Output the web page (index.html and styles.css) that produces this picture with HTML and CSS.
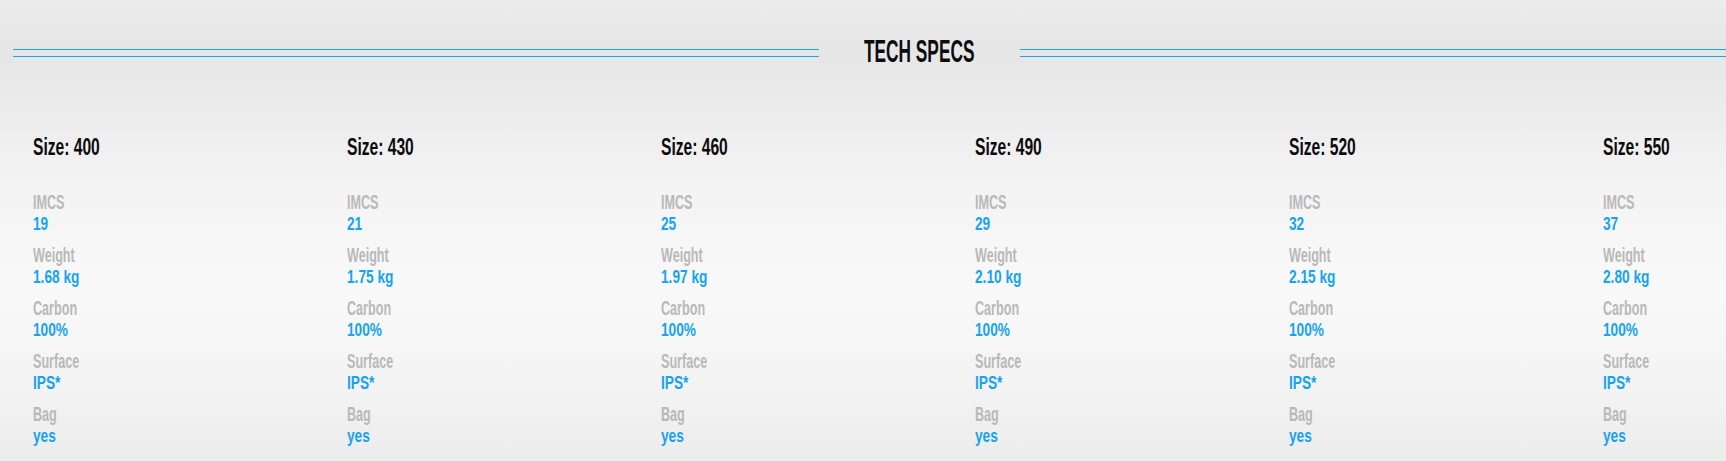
FILE: index.html
```html
<!DOCTYPE html>
<html lang="en">
<head>
<meta charset="utf-8">
<title>Tech Specs</title>
<link rel="stylesheet" href="styles.css">
</head>
<body>
<div class="page">
  <header class="title-row">
    <div class="rule rule-left"></div>
    <h2 class="title"><span class="title-text">TECH SPECS</span></h2>
    <div class="rule rule-right"></div>
  </header>
  <section class="specs">
    <div class="col">
      <h3 class="size"><span class="sq">Size: 400</span></h3>
      <dl class="list">
        <div class="item"><dt class="label"><span class="lq">IMCS</span></dt><dd class="value"><span class="vq">19</span></dd></div>
        <div class="item"><dt class="label"><span class="lq">Weight</span></dt><dd class="value"><span class="vq">1.68 kg</span></dd></div>
        <div class="item"><dt class="label"><span class="lq">Carbon</span></dt><dd class="value"><span class="vq">100%</span></dd></div>
        <div class="item"><dt class="label"><span class="lq">Surface</span></dt><dd class="value"><span class="vq">IPS*</span></dd></div>
        <div class="item"><dt class="label"><span class="lq">Bag</span></dt><dd class="value"><span class="vq">yes</span></dd></div>
      </dl>
    </div>
    <div class="col">
      <h3 class="size"><span class="sq">Size: 430</span></h3>
      <dl class="list">
        <div class="item"><dt class="label"><span class="lq">IMCS</span></dt><dd class="value"><span class="vq">21</span></dd></div>
        <div class="item"><dt class="label"><span class="lq">Weight</span></dt><dd class="value"><span class="vq">1.75 kg</span></dd></div>
        <div class="item"><dt class="label"><span class="lq">Carbon</span></dt><dd class="value"><span class="vq">100%</span></dd></div>
        <div class="item"><dt class="label"><span class="lq">Surface</span></dt><dd class="value"><span class="vq">IPS*</span></dd></div>
        <div class="item"><dt class="label"><span class="lq">Bag</span></dt><dd class="value"><span class="vq">yes</span></dd></div>
      </dl>
    </div>
    <div class="col">
      <h3 class="size"><span class="sq">Size: 460</span></h3>
      <dl class="list">
        <div class="item"><dt class="label"><span class="lq">IMCS</span></dt><dd class="value"><span class="vq">25</span></dd></div>
        <div class="item"><dt class="label"><span class="lq">Weight</span></dt><dd class="value"><span class="vq">1.97 kg</span></dd></div>
        <div class="item"><dt class="label"><span class="lq">Carbon</span></dt><dd class="value"><span class="vq">100%</span></dd></div>
        <div class="item"><dt class="label"><span class="lq">Surface</span></dt><dd class="value"><span class="vq">IPS*</span></dd></div>
        <div class="item"><dt class="label"><span class="lq">Bag</span></dt><dd class="value"><span class="vq">yes</span></dd></div>
      </dl>
    </div>
    <div class="col">
      <h3 class="size"><span class="sq">Size: 490</span></h3>
      <dl class="list">
        <div class="item"><dt class="label"><span class="lq">IMCS</span></dt><dd class="value"><span class="vq">29</span></dd></div>
        <div class="item"><dt class="label"><span class="lq">Weight</span></dt><dd class="value"><span class="vq">2.10 kg</span></dd></div>
        <div class="item"><dt class="label"><span class="lq">Carbon</span></dt><dd class="value"><span class="vq">100%</span></dd></div>
        <div class="item"><dt class="label"><span class="lq">Surface</span></dt><dd class="value"><span class="vq">IPS*</span></dd></div>
        <div class="item"><dt class="label"><span class="lq">Bag</span></dt><dd class="value"><span class="vq">yes</span></dd></div>
      </dl>
    </div>
    <div class="col">
      <h3 class="size"><span class="sq">Size: 520</span></h3>
      <dl class="list">
        <div class="item"><dt class="label"><span class="lq">IMCS</span></dt><dd class="value"><span class="vq">32</span></dd></div>
        <div class="item"><dt class="label"><span class="lq">Weight</span></dt><dd class="value"><span class="vq">2.15 kg</span></dd></div>
        <div class="item"><dt class="label"><span class="lq">Carbon</span></dt><dd class="value"><span class="vq">100%</span></dd></div>
        <div class="item"><dt class="label"><span class="lq">Surface</span></dt><dd class="value"><span class="vq">IPS*</span></dd></div>
        <div class="item"><dt class="label"><span class="lq">Bag</span></dt><dd class="value"><span class="vq">yes</span></dd></div>
      </dl>
    </div>
    <div class="col">
      <h3 class="size"><span class="sq">Size: 550</span></h3>
      <dl class="list">
        <div class="item"><dt class="label"><span class="lq">IMCS</span></dt><dd class="value"><span class="vq">37</span></dd></div>
        <div class="item"><dt class="label"><span class="lq">Weight</span></dt><dd class="value"><span class="vq">2.80 kg</span></dd></div>
        <div class="item"><dt class="label"><span class="lq">Carbon</span></dt><dd class="value"><span class="vq">100%</span></dd></div>
        <div class="item"><dt class="label"><span class="lq">Surface</span></dt><dd class="value"><span class="vq">IPS*</span></dd></div>
        <div class="item"><dt class="label"><span class="lq">Bag</span></dt><dd class="value"><span class="vq">yes</span></dd></div>
      </dl>
    </div>
  </section>
</div>
</body>
</html>
```

FILE: styles.css
```css
html, body {
  margin: 0;
  padding: 0;
}

body {
  width: 1726px;
  height: 461px;
  overflow: hidden;
  font-family: "Liberation Sans", Arial, sans-serif;
  background: linear-gradient(to bottom, #ececec 0px, #e6e6e6 50px, #f3f3f3 180px, #f9f9f9 290px, #f3f3f3 390px, #ececec 461px);
}

.page {
  width: 1726px;
  height: 461px;
  overflow: hidden;
}

/* ---------- title row ---------- */
.title-row {
  display: flex;
  align-items: flex-start;
  padding: 35px 0 0 13px;
  height: 32px;
}

.rule {
  height: 6px;
  margin-top: 14px;
  border-top: 1px solid #1aa6ec;
  border-bottom: 1px solid #1aa6ec;
}

.rule-left {
  width: 806px;
  flex: 0 0 806px;
}

.rule-right {
  flex: 1 1 auto;
  margin-left: 46px;
}

.title {
  margin: 0 0 0 45px;
  width: 110px;
  flex: 0 0 110px;
  font-size: 32px;
  line-height: 32px;
  font-weight: 700;
  color: #0c0c0c;
  white-space: nowrap;
}

.title-text {
  display: inline-block;
  transform: scaleX(0.54);
  transform-origin: left center;
}

/* ---------- spec columns ---------- */
.specs {
  display: flex;
  margin-top: 68px;
  padding-left: 33px;
}

.col {
  flex: 0 0 314px;
  width: 314px;
}

.size {
  margin: 0 0 32px 0;
  font-size: 24px;
  line-height: 24px;
  font-weight: 700;
  color: #0c0c0c;
  white-space: nowrap;
}

.sq {
  display: inline-block;
  transform: scaleX(0.65);
  transform-origin: left center;
}

.list {
  margin: 0;
  padding: 0;
}

.item {
  margin-bottom: 9px;
}

.label {
  margin: 0;
  font-size: 20px;
  line-height: 22px;
  font-weight: 700;
  color: #b9b9b9;
  white-space: nowrap;
}

.lq {
  display: inline-block;
  transform: scaleX(0.63);
  transform-origin: left center;
}

.value {
  margin: 0;
  font-size: 19px;
  line-height: 22px;
  font-weight: 700;
  color: #17a3ee;
  white-space: nowrap;
}

.vq {
  display: inline-block;
  transform: scaleX(0.72);
  transform-origin: left center;
}
```
